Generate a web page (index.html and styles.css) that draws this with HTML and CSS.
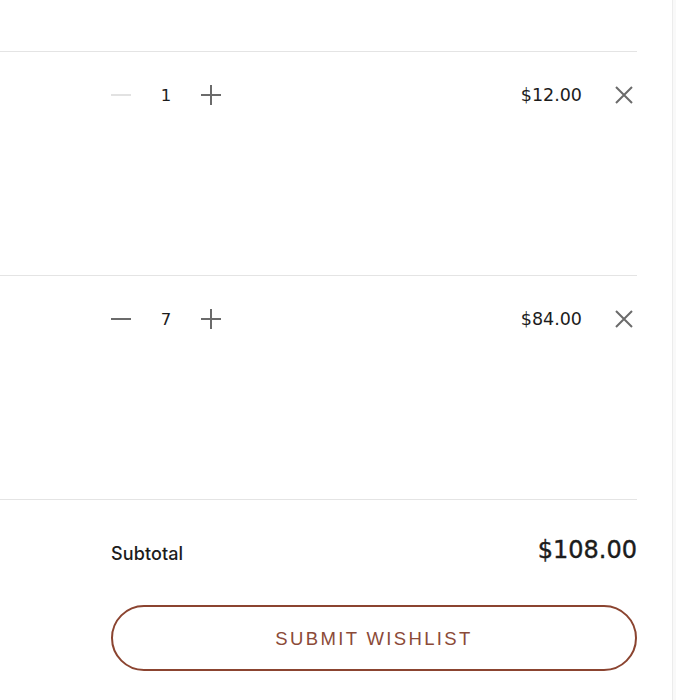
FILE: index.html
```html
<!DOCTYPE html>
<html lang="en">
<head>
<meta charset="utf-8">
<title>Wishlist</title>
<link rel="stylesheet" href="styles.css">
</head>
<body>
<div class="page">
  <main class="cart">
    <div class="item">
      <div class="qty">
        <button class="qty-btn minus disabled" aria-label="Decrease">
          <svg viewBox="0 0 22 22" width="22" height="22"><path d="M1 11h20" /></svg>
        </button>
        <span class="qty-val">1</span>
        <button class="qty-btn plus" aria-label="Increase">
          <svg viewBox="0 0 22 22" width="22" height="22"><path d="M1 11h20M11 1v20" /></svg>
        </button>
      </div>
      <div class="price">$12.00</div>
      <button class="remove" aria-label="Remove">
        <svg viewBox="0 0 20 20" width="20" height="20"><path d="M2 2l16 16M18 2L2 18" /></svg>
      </button>
    </div>
    <div class="item">
      <div class="qty">
        <button class="qty-btn minus" aria-label="Decrease">
          <svg viewBox="0 0 22 22" width="22" height="22"><path d="M1 11h20" /></svg>
        </button>
        <span class="qty-val">7</span>
        <button class="qty-btn plus" aria-label="Increase">
          <svg viewBox="0 0 22 22" width="22" height="22"><path d="M1 11h20M11 1v20" /></svg>
        </button>
      </div>
      <div class="price">$84.00</div>
      <button class="remove" aria-label="Remove">
        <svg viewBox="0 0 20 20" width="20" height="20"><path d="M2 2l16 16M18 2L2 18" /></svg>
      </button>
    </div>
    <div class="summary">
      <div class="subtotal">
        <span class="subtotal-label">Subtotal</span>
        <span class="subtotal-value">$108.00</span>
      </div>
      <button class="submit">SUBMIT WISHLIST</button>
    </div>
  </main>
  <aside class="edge"></aside>
</div>
</body>
</html>
```
FILE: styles.css
```css
html, body {
  margin: 0;
  padding: 0;
  background: #ffffff;
}
body {
  font-family: Inter, "Liberation Sans", sans-serif;
  color: #1c1c1c;
}
.page {
  display: flex;
  min-height: 700px;
}
.cart {
  width: 637px;
  padding-top: 51px;
  flex: none;
}
.item {
  border-top: 1px solid #e4e4e4;
  display: flex;
  align-items: flex-start;
  padding-left: 110px;
  padding-top: 31px;
  box-sizing: border-box;
  height: 224px;
}
.qty {
  display: flex;
  align-items: center;
  height: 24px;
}
.qty-btn {
  border: 0;
  background: none;
  padding: 0;
  width: 22px;
  height: 22px;
  display: flex;
  align-items: center;
  justify-content: center;
}
.qty-btn svg, .remove svg {
  fill: none;
  stroke: #6b6b6b;
  stroke-width: 2;
}
.qty-btn.disabled svg {
  stroke: #e2e2e2;
}
.qty-val {
  width: 68px;
  text-align: center;
  font-family: "DejaVu Sans", sans-serif;
  font-size: 16.5px;
  color: #1c1c1c;
}
.price {
  margin-left: auto;
  font-family: "DejaVu Sans", sans-serif;
  font-size: 17.5px;
  line-height: 24px;
  color: #1c1c1c;
}
.remove {
  border: 0;
  background: none;
  padding: 0;
  margin-left: 32px;
  margin-right: 3px;
  width: 20px;
  height: 24px;
  display: flex;
  align-items: center;
  justify-content: center;
}
.summary {
  border-top: 1px solid #e4e4e4;
  padding-left: 111px;
  padding-top: 35px;
}
.subtotal {
  display: flex;
  align-items: center;
  justify-content: space-between;
  height: 30px;
}
.subtotal-label {
  font-size: 18px;
  font-weight: 500;
  letter-spacing: 0.1px;
  margin-top: 6px;
}
.subtotal-value {
  font-family: "DejaVu Sans", sans-serif;
  font-size: 24px;
  -webkit-text-stroke: 0.4px #1c1c1c;
}
.submit {
  margin-top: 40px;
  width: 100%;
  height: 66px;
  border: 2px solid #8b4430;
  border-radius: 33px;
  background: #ffffff;
  color: #8b4a38;
  font-family: "Liberation Sans", Arial, sans-serif;
  font-size: 18.5px;
  letter-spacing: 2.35px;
  padding-top: 2px;
}
.edge {
  margin-left: 35px;
  flex: 1;
  border-left: 1px solid #ececec;
  background: #f9f9f9;
}
```
